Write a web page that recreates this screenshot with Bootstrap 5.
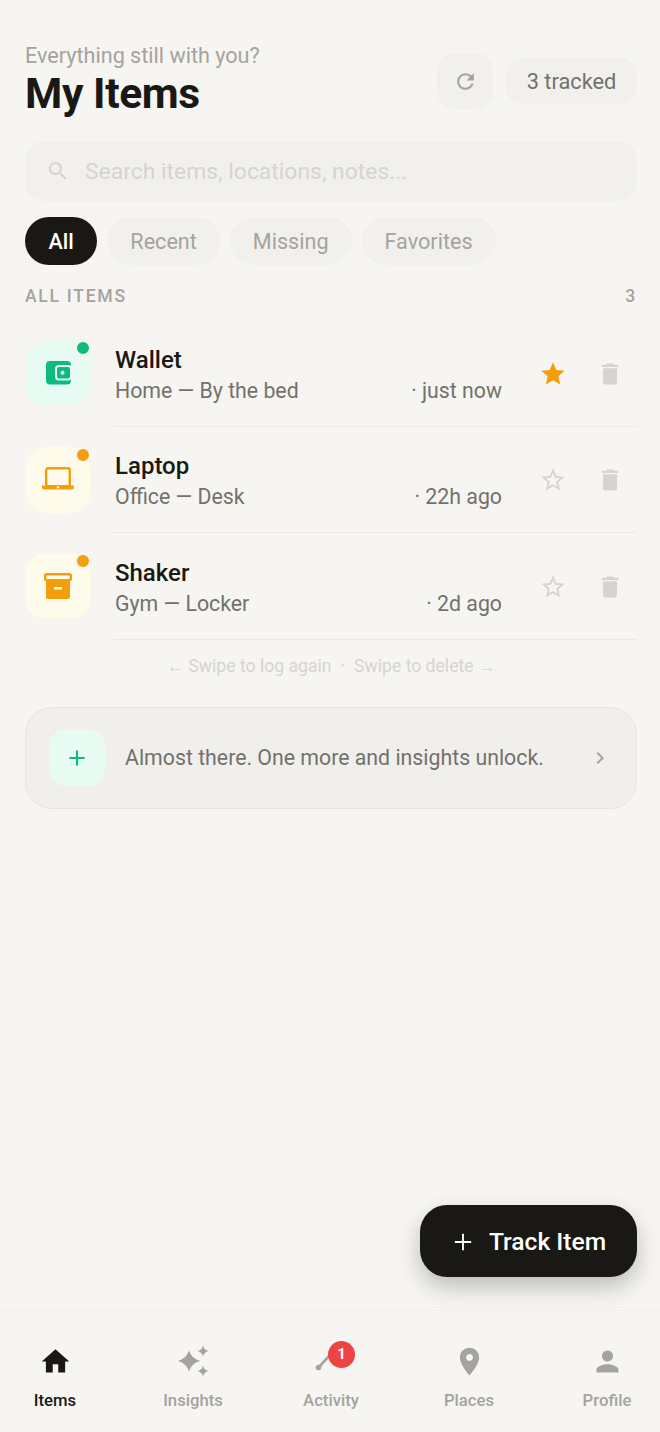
<!DOCTYPE html>
<html lang="en">
<head>
<meta charset="UTF-8">
<meta name="viewport" content="width=device-width, initial-scale=1.0">
<link href="https://cdn.jsdelivr.net/npm/bootstrap@5.3.2/dist/css/bootstrap.min.css" rel="stylesheet">
<style>
body { background: #f6f5f1; font-family: Roboto, "Liberation Sans", sans-serif; color: #1a1814; }
svg { display: block; fill: currentColor; }
.screen { height: 1432px; position: relative; overflow: hidden; }
.page { padding: 44px 23px 0 25px; }
.head-top { height: 72px; }
.hello { font-size: 21.6px; line-height: 24px; color: #a5a39d; }
.head-title { font-size: 42.6px; line-height: 48px; font-weight: 700; letter-spacing: -.4px; margin: 1px 0 0; color: #1a1814; }
.refresh-btn { width: 56px; height: 56px; border-radius: 17px; background: #f1f0ec; color: #a5a39d; border: 0; margin-right: 13px; margin-top: 9px; }
.tracked { height: 46px; width: 131px; border-radius: 17px; background: #f1f0ec; color: #73716b; font-size: 21.8px; margin-top: 14px; padding-top: 2px; }
.search-bar { height: 60px; margin-top: 25px; border-radius: 19px; background: #f1f0ec; color: #d6d4cf; font-size: 22.9px; padding-left: 21px; gap: 15px; }
.search-bar span { padding-top: 2px; }
.chips { margin-top: 16px; gap: 10px; }
.chip-item { height: 48px; padding: 2px 23px 0; border-radius: 24px; background: #f1f0ec; color: #a5a39d; font-size: 21.6px; border: 0; }
.chip-item.on { background: #1a1814; color: #fff; font-weight: 500; padding: 2px 23.5px 0; }
.sec-head { margin-top: 21px; height: 20px; font-size: 17.6px; font-weight: 500; letter-spacing: 1.7px; color: #a5a39d; }
.item-list { margin-top: 14px; }
.item-row { height: 106.5px; }
.tile { width: 66px; height: 66px; border-radius: 22px; position: relative; flex: none; margin: 20px 23px 0 0; }
.tile-green { background: #e8fbf3; color: #10b981; }
.tile-amber { background: #fefbea; color: #f59e0b; }
.live-dot { position: absolute; top: 0; right: 0; width: 16px; height: 16px; border-radius: 50%; border: 2px solid #f6f5f1; }
.dot-green { background: #10b981; }
.dot-amber { background: #f59e0b; }
.row-body { border-bottom: 1px solid #e9e8e4; padding-top: 2px; }
.row-text { width: 388px; padding: 3px 0 0 1px; }
.item-name { font-size: 24px; line-height: 30px; font-weight: 500; color: #1a1814; }
.item-sub { font-size: 21.3px; line-height: 30px; margin-top: 1px; color: #73716b; }
.act-star { width: 40px; margin-left: 31px; color: #d6d4cf; }
.act-star.fav { color: #f59e0b; }
.act-bin { width: 40px; margin-left: 17px; color: #d6d4cf; }
.swipe-hint { margin-top: 14px; line-height: 24px; font-size: 17.6px; color: #d6d4cf; gap: 9px; }
.unlock-card { margin-top: 29px; height: 102px; border: 1.5px solid #e7e5e0; border-radius: 27px; background: #f1efeb; padding: 0 24px 0 23px; }
.plus-tile { width: 56px; height: 57px; border-radius: 17px; background: #e8fbf3; color: #10b981; margin-right: 20px; }
.unlock-text { font-size: 21.3px; color: #73716b; padding-top: 1px; }
.unlock-go { color: #a5a39d; }
.fab { position: absolute; left: 420px; top: 1205px; width: 217px; height: 72px; border-radius: 27px; background: #1a1814; color: #fff; font-size: 24.6px; font-weight: 500; border: 0; gap: 12px; padding: 2px 2px 0 0; box-shadow: 0 10px 22px rgba(26,24,20,.25); }
.tabbar { position: absolute; left: 0; right: 0; bottom: 0; height: 122px; border-top: 1px solid #eeede9; padding: 32px 23px 0 25px; }
.tab-item { width: 60px; color: #a5a39d; font-size: 16.7px; font-weight: 500; position: relative; }
.tab-item.on { color: #1a1814; }
.tab-ico { height: 36px; margin-bottom: 12px; }
.tab-label { line-height: 20px; white-space: nowrap; }
.tab-badge { position: absolute; top: -2px; left: 27px; width: 27px; height: 27px; border-radius: 50%; background: #ef4444; color: #fff; font-size: 15px; font-weight: 700; }
</style>
<title>My Items</title>
</head>
<body>
<div class="screen">
  <div class="page">
    <div class="d-flex justify-content-between head-top">
      <div>
        <div class="hello">Everything still with you?</div>
        <h1 class="head-title">My Items</h1>
      </div>
      <div class="d-flex align-items-start">
        <button class="refresh-btn d-flex align-items-center justify-content-center"><svg width="25" height="25" viewBox="0 0 24 24"><path d="M17.65 6.35C16.2 4.9 14.21 4 12 4c-4.42 0-7.99 3.58-7.99 8s3.57 8 7.99 8c3.73 0 6.84-2.55 7.73-6h-2.08c-.82 2.33-3.04 4-5.65 4-3.31 0-6-2.69-6-6s2.69-6 6-6c1.66 0 3.14.69 4.22 1.78L13 11h7V4l-2.35 2.35z"/></svg></button>
        <div class="tracked d-flex align-items-center justify-content-center">3 tracked</div>
      </div>
    </div>

    <div class="search-bar d-flex align-items-center">
      <svg width="24" height="24" viewBox="0 0 24 24"><path d="M15.5 14h-.79l-.28-.27C15.41 12.59 16 11.11 16 9.5 16 5.91 13.09 3 9.5 3S3 5.91 3 9.5 5.91 16 9.5 16c1.61 0 3.09-.59 4.23-1.57l.27.28v.79l5 4.99L20.49 19l-4.99-5zm-6 0C7.01 14 5 11.99 5 9.5S7.01 5 9.5 5 14 7.01 14 9.5 11.99 14 9.5 14z"/></svg>
      <span>Search items, locations, notes...</span>
    </div>

    <div class="chips d-flex">
      <button class="chip-item on">All</button>
      <button class="chip-item">Recent</button>
      <button class="chip-item">Missing</button>
      <button class="chip-item">Favorites</button>
    </div>

    <div class="sec-head d-flex justify-content-between align-items-center"><span>ALL ITEMS</span><span>3</span></div>

    <div class="item-list">
      <div class="item-row d-flex">
        <div class="tile tile-green d-flex align-items-center justify-content-center">
          <svg width="25" height="24" viewBox="0 0 25 24"><rect x="0" y="0" width="25" height="23.500" rx="4"/><rect x="10" y="5" width="15" height="13.500" rx="3" stroke="#e8fbf3" stroke-width="2"/><circle cx="16.500" cy="11.800" r="2" fill="#e8fbf3"/></svg>
          <span class="live-dot dot-green"></span>
        </div>
        <div class="row-body flex-grow-1 d-flex align-items-center">
          <div class="row-text">
            <div class="item-name">Wallet</div>
            <div class="item-sub d-flex justify-content-between"><span>Home — By the bed</span><span>· just now</span></div>
          </div>
          <div class="act-star fav d-flex justify-content-center"><svg width="28" height="28" viewBox="0 0 24 24"><path d="M12 17.27L18.18 21l-1.64-7.03L22 9.24l-7.19-.61L12 2 9.19 8.63 2 9.24l5.46 4.73L5.82 21z"/></svg></div>
          <div class="act-bin d-flex justify-content-center"><svg width="28" height="28" viewBox="0 0 24 24"><path d="M6 19c0 1.1.9 2 2 2h8c1.1 0 2-.9 2-2V7H6v12zM19 4h-3.5l-1-1h-5l-1 1H5v2h14V4z"/></svg></div>
        </div>
      </div>
      <div class="item-row d-flex">
        <div class="tile tile-amber d-flex align-items-center justify-content-center">
          <svg width="32" height="26" viewBox="0 0 32 26"><rect x="4.200" y="1.200" width="23.600" height="18" rx="2" fill="none" stroke="currentColor" stroke-width="2.400"/><path d="M0 18.500h32v1.500a2.500 2.500 0 0 1-2.500 2.500h-27A2.500 2.500 0 0 1 0 20z"/><circle cx="16" cy="20.300" r="1.200" fill="#fefbea"/></svg>
          <span class="live-dot dot-amber"></span>
        </div>
        <div class="row-body flex-grow-1 d-flex align-items-center">
          <div class="row-text">
            <div class="item-name">Laptop</div>
            <div class="item-sub d-flex justify-content-between"><span>Office — Desk</span><span>· 22h ago</span></div>
          </div>
          <div class="act-star d-flex justify-content-center"><svg width="28" height="28" viewBox="0 0 24 24"><path d="M22 9.24l-7.19-.62L12 2 9.19 8.63 2 9.24l5.46 4.73L5.82 21 12 17.27 18.18 21l-1.63-7.03L22 9.24zM12 15.4l-3.76 2.27 1-4.28-3.32-2.88 4.38-.38L12 6.1l1.71 4.04 4.38.38-3.32 2.88 1 4.28L12 15.4z"/></svg></div>
          <div class="act-bin d-flex justify-content-center"><svg width="28" height="28" viewBox="0 0 24 24"><path d="M6 19c0 1.1.9 2 2 2h8c1.1 0 2-.9 2-2V7H6v12zM19 4h-3.5l-1-1h-5l-1 1H5v2h14V4z"/></svg></div>
        </div>
      </div>
      <div class="item-row d-flex">
        <div class="tile tile-amber d-flex align-items-center justify-content-center">
          <svg width="28" height="26" viewBox="0 0 28 26"><rect x="1.200" y="1.200" width="25.600" height="6" rx="1.500" fill="none" stroke="currentColor" stroke-width="2.400"/><path fill-rule="evenodd" d="M2 7.500h24V24a2 2 0 0 1-2 2H4a2 2 0 0 1-2-2zM10 14v2.400h8V14z"/></svg>
          <span class="live-dot dot-amber"></span>
        </div>
        <div class="row-body flex-grow-1 d-flex align-items-center">
          <div class="row-text">
            <div class="item-name">Shaker</div>
            <div class="item-sub d-flex justify-content-between"><span>Gym — Locker</span><span>· 2d ago</span></div>
          </div>
          <div class="act-star d-flex justify-content-center"><svg width="28" height="28" viewBox="0 0 24 24"><path d="M22 9.24l-7.19-.62L12 2 9.19 8.63 2 9.24l5.46 4.73L5.82 21 12 17.27 18.18 21l-1.63-7.03L22 9.24zM12 15.4l-3.76 2.27 1-4.28-3.32-2.88 4.38-.38L12 6.1l1.71 4.04 4.38.38-3.32 2.88 1 4.28L12 15.4z"/></svg></div>
          <div class="act-bin d-flex justify-content-center"><svg width="28" height="28" viewBox="0 0 24 24"><path d="M6 19c0 1.1.9 2 2 2h8c1.1 0 2-.9 2-2V7H6v12zM19 4h-3.5l-1-1h-5l-1 1H5v2h14V4z"/></svg></div>
        </div>
      </div>
    </div>

    <div class="swipe-hint d-flex justify-content-center"><span>← Swipe to log again</span><span>·</span><span>Swipe to delete →</span></div>

    <div class="unlock-card d-flex align-items-center">
      <div class="plus-tile d-flex align-items-center justify-content-center"><svg width="26" height="26" viewBox="0 0 24 24"><path d="M19 13h-6v6h-2v-6H5v-2h6V5h2v6h6v2z"/></svg></div>
      <div class="unlock-text flex-grow-1">Almost there. One more and insights unlock.</div>
      <div class="unlock-go"><svg width="24" height="24" viewBox="0 0 24 24"><path d="M10 6L8.590 7.410 13.170 12l-4.580 4.590L10 18l6-6z"/></svg></div>
    </div>
  </div>

  <button class="fab d-flex align-items-center justify-content-center"><svg width="28" height="28" viewBox="0 0 24 24"><path d="M19 12.800h-6.200V19h-1.600v-6.200H5v-1.600h6.200V5h1.600v6.200H19z"/></svg><span>Track Item</span></button>

  <nav class="tabbar d-flex justify-content-between">
    <div class="tab-item on d-flex flex-column align-items-center">
      <div class="tab-ico d-flex align-items-center"><svg width="33" height="33" viewBox="0 0 24 24"><path d="M10 20v-6h4v6h5v-8h3L12 3 2 12h3v8z"/></svg></div>
      <div class="tab-label">Items</div>
    </div>
    <div class="tab-item d-flex flex-column align-items-center">
      <div class="tab-ico d-flex align-items-center"><svg width="34" height="34" viewBox="0 0 34 34"><path d="M13 6.500Q15.500 14.500 24 17 15.500 19.500 13 27.500 10.500 19.500 2 17 10.500 14.500 13 6.500zM27 1.500Q28 6 32.500 7 28 8 27 12.500 26 8 21.500 7 26 6 27 1.500zM27 21.500Q28 26 32.500 27 28 28 27 32.500 26 28 21.500 27 26 26 27 21.500z"/></svg></div>
      <div class="tab-label">Insights</div>
    </div>
    <div class="tab-item d-flex flex-column align-items-center">
      <div class="tab-ico d-flex align-items-center"><svg width="33" height="33" viewBox="0 0 33 33"><circle cx="3.500" cy="22.500" r="2.800"/><path d="M3.500 22.500L14.500 10.500" stroke="currentColor" stroke-width="2.600" fill="none"/></svg></div>
      <div class="tab-label">Activity</div>
      <span class="tab-badge d-flex align-items-center justify-content-center">1</span>
    </div>
    <div class="tab-item d-flex flex-column align-items-center">
      <div class="tab-ico d-flex align-items-center"><svg width="33" height="33" viewBox="0 0 24 24"><path d="M12 2C8.130 2 5 5.130 5 9c0 5.250 7 13 7 13s7-7.750 7-13c0-3.870-3.130-7-7-7zm0 9.500c-1.380 0-2.500-1.120-2.500-2.500s1.120-2.500 2.500-2.500 2.500 1.120 2.500 2.500-1.120 2.500-2.500 2.500z"/></svg></div>
      <div class="tab-label">Places</div>
    </div>
    <div class="tab-item d-flex flex-column align-items-center">
      <div class="tab-ico d-flex align-items-center"><svg width="33" height="33" viewBox="0 0 24 24"><path d="M12 12c2.210 0 4-1.790 4-4s-1.790-4-4-4-4 1.790-4 4 1.790 4 4 4zm0 2c-2.670 0-8 1.340-8 4v2h16v-2c0-2.660-5.330-4-8-4z"/></svg></div>
      <div class="tab-label">Profile</div>
    </div>
  </nav>
</div>
<script src="https://cdn.jsdelivr.net/npm/bootstrap@5.3.2/dist/js/bootstrap.bundle.min.js"></script>
</body>
</html>
